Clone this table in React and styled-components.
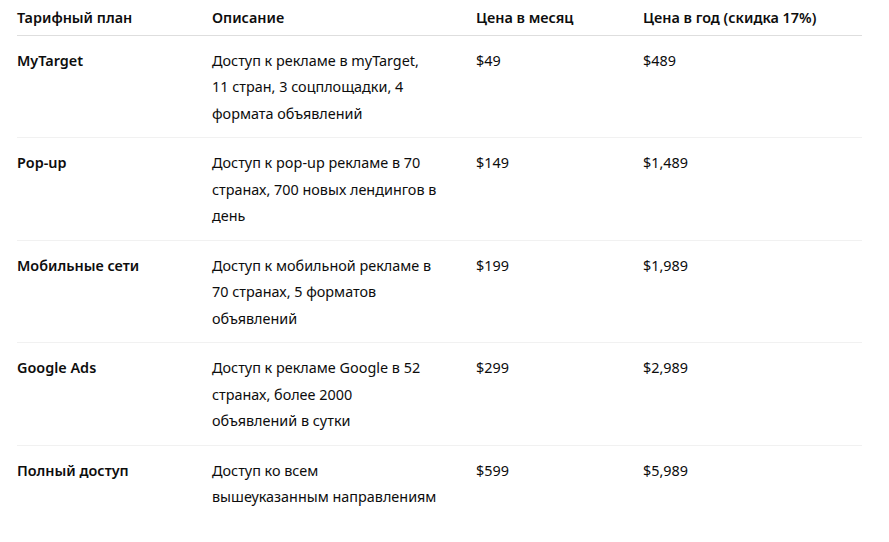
import React from "react";
import styled, { createGlobalStyle } from "styled-components";

const GlobalStyle = createGlobalStyle`
    html, body {
        margin: 0;
        padding: 0;
        background: #fff;
    }

    body {
        font-family: "Noto Sans", "Open Sans", Arial, sans-serif;
        color: #0d0d0d;
        -webkit-font-smoothing: antialiased;
    }
`

const Page = styled.div`
    padding: 0 27px 0 17px;
`

const Table = styled.table`
    width: 845px;
    border-collapse: collapse;
    table-layout: fixed;
    font-size: 14.4px;
    line-height: 26.5px;
`

const HeadCell = styled.th`
    text-align: left;
    font-weight: 600;
    padding: 5px 0 3px;
    border-bottom: 1px solid #dedede;
    vertical-align: top;
`

const Row = styled.tr`
    border-bottom: 1px solid ${(p) => (p.$last ? "transparent" : "#f1f1f1")};
`

const Cell = styled.td`
    padding: 12px 0 10px;
    vertical-align: top;
    font-weight: ${(p) => (p.$bold ? 600 : 400)};
    white-space: nowrap;
`

const columns = [
    { title: "Тарифный план", width: 195 },
    { title: "Описание", width: 264 },
    { title: "Цена в месяц", width: 167 },
    { title: "Цена в год (скидка 17%)", width: 219 },
]

const plans = [
    {
        name: "MyTarget",
        desc: ["Доступ к рекламе в myTarget,", "11 стран, 3 соцплощадки, 4", "формата объявлений"],
        month: "$49",
        year: "$489",
    },
    {
        name: "Pop-up",
        desc: ["Доступ к pop-up рекламе в 70", "странах, 700 новых лендингов в", "день"],
        month: "$149",
        year: "$1,489",
    },
    {
        name: "Мобильные сети",
        desc: ["Доступ к мобильной рекламе в", "70 странах, 5 форматов", "объявлений"],
        month: "$199",
        year: "$1,989",
    },
    {
        name: "Google Ads",
        desc: ["Доступ к рекламе Google в 52", "странах, более 2000", "объявлений в сутки"],
        month: "$299",
        year: "$2,989",
    },
    {
        name: "Полный доступ",
        desc: ["Доступ ко всем", "вышеуказанным направлениям"],
        month: "$599",
        year: "$5,989",
    },
]

const App = () => {
    return (
        <Page>
            <GlobalStyle />
            <Table>
                <colgroup>
                    {columns.map((col) => (
                        <col key={col.title} style={{ width: col.width }} />
                    ))}
                </colgroup>
                <thead>
                    <tr>
                        {columns.map((col) => (
                            <HeadCell key={col.title}>{col.title}</HeadCell>
                        ))}
                    </tr>
                </thead>
                <tbody>
                    {plans.map((plan, i) => (
                        <Row key={plan.name} $last={i === plans.length - 1}>
                            <Cell $bold>{plan.name}</Cell>
                            <Cell>
                                {plan.desc.map((line, k) => (
                                    <div key={k}>{line}</div>
                                ))}
                            </Cell>
                            <Cell>{plan.month}</Cell>
                            <Cell>{plan.year}</Cell>
                        </Row>
                    ))}
                </tbody>
            </Table>
        </Page>
    )
}

export default App;
